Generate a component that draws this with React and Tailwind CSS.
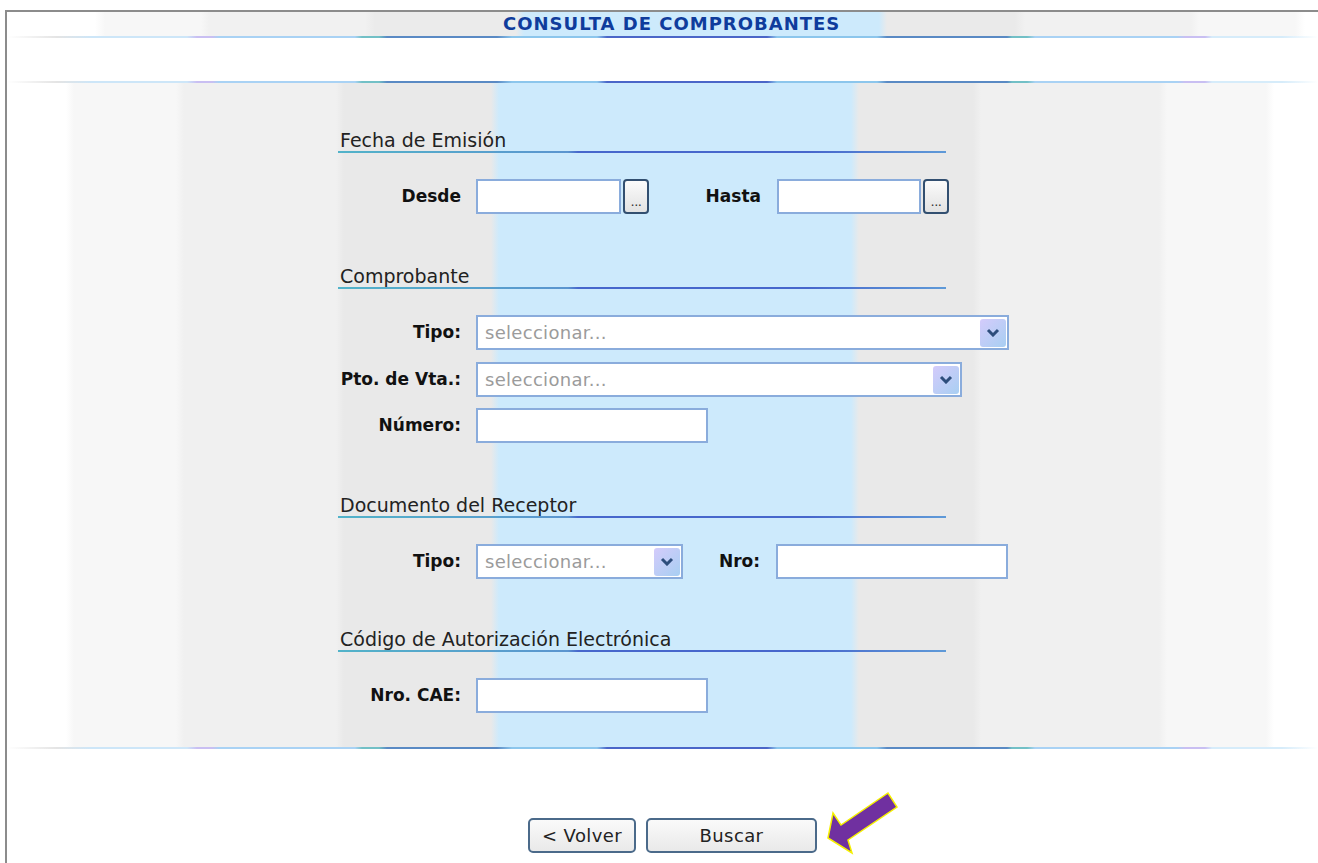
import React from "react";

// horizontal rule with the blue/teal/lavender segments used above and below the panels
const ruleBg =
  "bg-[linear-gradient(90deg,#ffffff_0px,#e4e4e4_50px,#cde6f8_85px,#cde6f8_180px,#c9bff2_190px,#c9bff2_205px,#a9d2f4_212px,#a9d2f4_348px,#72c0c6_355px,#72c0c6_372px,#5a8ac4_380px,#5a8ac4_490px,#8cc6ec_505px,#8cc6ec_590px,#4b66c8_600px,#4b66c8_760px,#8cc6ec_770px,#8cc6ec_870px,#5a8ac4_880px,#5a8ac4_1000px,#72c0c6_1005px,#72c0c6_1020px,#a9d2f4_1028px,#a9d2f4_1170px,#c9bff2_1178px,#c9bff2_1198px,#d6ecfa_1205px,#d6ecfa_1275px,#ffffff_1311px)]";

function Rule() {
  return <div className={`h-[2px] w-full ${ruleBg}`} />;
}

function TitleBar() {
  return (
    <div className="h-[24px] flex items-center pl-[496px] bg-[linear-gradient(90deg,#ffffff_0px,#ffffff_88px,#f7f7f7_98px,#f7f7f7_194px,#f1f1f1_202px,#f1f1f1_358px,#ebebeb_368px,#ebebeb_509px,#cdeafc_517px,#cdeafc_872px,#eaeaea_880px,#eaeaea_1008px,#f1f1f1_1018px,#f1f1f1_1184px,#f7f7f7_1192px,#f7f7f7_1288px,#ffffff_1298px)]">
      <h1 className="text-[18px] font-bold tracking-[1px] text-[#0f3c9c] leading-none">
        CONSULTA DE COMPROBANTES
      </h1>
    </div>
  );
}

function Heading({ children, className = "" }) {
  return (
    <div className={`w-[608px] ${className}`}>
      <div className="h-[22px] leading-[22px] pl-[2px] text-[19px] text-[#222]">{children}</div>
      <div className="h-[2px] bg-[linear-gradient(90deg,#52b3c9_0px,#5b95cf_230px,#4767cc_240px,#4767cc_470px,#5f9ad8_608px)]" />
    </div>
  );
}

function Label({ children, className = "w-[123px]" }) {
  return (
    <div className={`${className} text-right text-[17px] font-bold text-[#111] shrink-0`}>
      {children}
    </div>
  );
}

function TextBox({ className }) {
  return <div className={`${className} h-[35px] border-2 border-[#8aacdc] bg-white shrink-0`} />;
}

function DotsButton() {
  return (
    <div className="ml-[2px] w-[26px] h-[35px] rounded-[4px] border-2 border-[#324f70] bg-[linear-gradient(180deg,#fbfbfb,#e2e2e2)] flex items-end justify-center pb-[4px] shrink-0">
      <span className="text-[13px] leading-none tracking-[-0.5px] text-[#333]">...</span>
    </div>
  );
}

function Select({ className }) {
  return (
    <div className={`${className} h-[35px] border-2 border-[#8aacdc] bg-white flex items-center justify-between pl-[7px] pr-[1px] shrink-0`}>
      <span className="text-[18px] text-[#9b9b9b] tracking-[0.3px]">seleccionar...</span>
      <span className="w-[26px] h-[28px] rounded-[3px] bg-[linear-gradient(135deg,#d4cbfb,#a8cff2)] flex items-center justify-center">
        <svg viewBox="0 0 14 9" className="w-[14px] h-[9px]">
          <path d="M2 2 L7 7 L12 2" stroke="#2d4d7c" strokeWidth="3" fill="none" />
        </svg>
      </span>
    </div>
  );
}

function Row({ children, className = "" }) {
  return <div className={`flex items-center h-[35px] ${className}`}>{children}</div>;
}

function FormBody() {
  return (
    <div className="h-[664px] pl-[331px] pt-[46px] bg-[linear-gradient(90deg,#ffffff_0px,#ffffff_59px,#f7f7f7_67px,#f7f7f7_169px,#f0f0f0_177px,#f0f0f0_329px,#e9e9e9_337px,#e9e9e9_484px,#cdeafc_492px,#cdeafc_844px,#e9e9e9_852px,#e9e9e9_966px,#f0f0f0_974px,#f0f0f0_1152px,#f7f7f7_1160px,#f7f7f7_1259px,#ffffff_1267px)]">
      <Heading>Fecha de Emisión</Heading>
      <Row className="mt-[26px]">
        <Label>Desde</Label>
        <TextBox className="ml-[15px] w-[145px]" />
        <DotsButton />
        <Label className="w-[112px]">Hasta</Label>
        <TextBox className="ml-[16px] w-[144px]" />
        <DotsButton />
      </Row>

      <Heading className="mt-[51px]">Comprobante</Heading>
      <Row className="mt-[26px]">
        <Label>Tipo:</Label>
        <Select className="ml-[15px] w-[533px]" />
      </Row>
      <Row className="mt-[12px]">
        <Label>Pto. de Vta.:</Label>
        <Select className="ml-[15px] w-[486px]" />
      </Row>
      <Row className="mt-[11px]">
        <Label>Número:</Label>
        <TextBox className="ml-[15px] w-[232px]" />
      </Row>

      <Heading className="mt-[51px]">Documento del Receptor</Heading>
      <Row className="mt-[26px]">
        <Label>Tipo:</Label>
        <Select className="ml-[15px] w-[207px]" />
        <Label className="w-[77px]">Nro:</Label>
        <TextBox className="ml-[16px] w-[232px]" />
      </Row>

      <Heading className="mt-[49px]">Código de Autorización Electrónica</Heading>
      <Row className="mt-[26px]">
        <Label>Nro. CAE:</Label>
        <TextBox className="ml-[15px] w-[232px]" />
      </Row>
    </div>
  );
}

function Button({ children, className }) {
  return (
    <button className={`${className} h-[35px] rounded-[5px] border-2 border-[#4b6a8a] bg-[linear-gradient(180deg,#fafafa,#e9e9e9)] text-[18px] tracking-[0.4px] text-[#222]`}>
      {children}
    </button>
  );
}

function PointerArrow() {
  return (
    <svg className="absolute left-[822px] top-[788px]" width="80" height="70" viewBox="0 0 80 70">
      <polygon
        points="6,50 30,65 26,52 75,19 66,5 19,37 11,25"
        fill="#7030a0"
        stroke="#f5f000"
        strokeWidth="1.5"
        strokeLinejoin="miter"
      />
    </svg>
  );
}

export default function App() {
  return (
    <div className="relative w-[1318px] h-[863px] bg-white overflow-hidden font-['DejaVu_Sans',sans-serif]">
      <div className="ml-[5px] mt-[10px] h-[853px] border-l-2 border-t-2 border-[#8c8c8c] flex flex-col">
        <TitleBar />
        <Rule />
        <div className="h-[43px]" />
        <Rule />
        <FormBody />
        <Rule />
        <div className="flex pl-[521px] pt-[69px] gap-[10px]">
          <Button className="w-[108px]">&lt; Volver</Button>
          <Button className="w-[171px]">Buscar</Button>
        </div>
      </div>
      <PointerArrow />
    </div>
  );
}
